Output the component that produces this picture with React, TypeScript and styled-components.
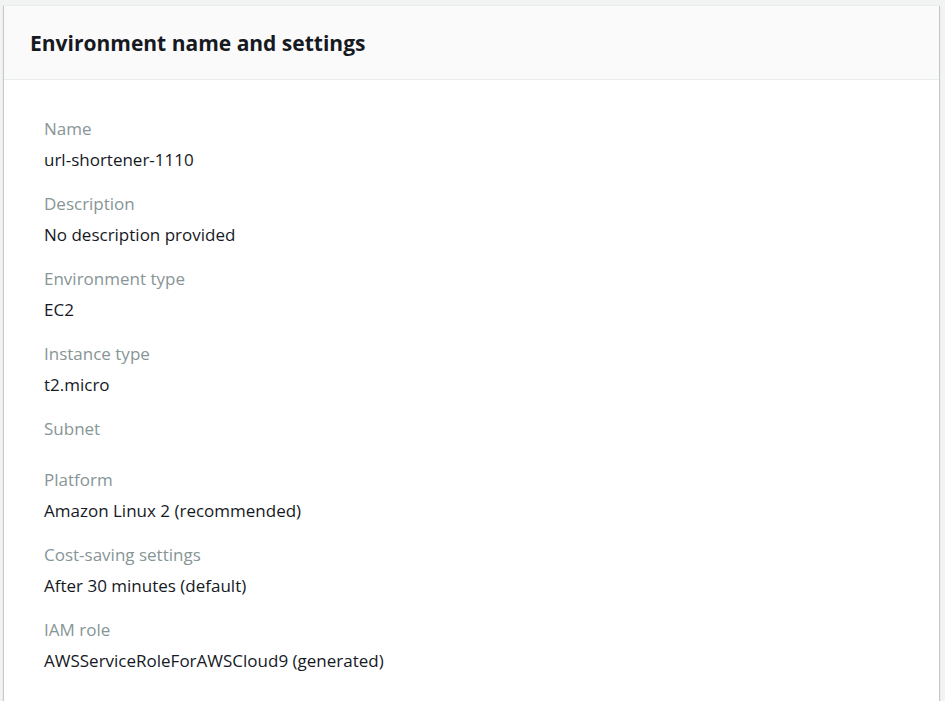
import React from 'react'
import styled, { createGlobalStyle } from 'styled-components'

const GlobalStyle = createGlobalStyle`
  body {
    margin: 0;
    background: #f2f3f3;
    font-family: "Open Sans", Arial, sans-serif;
    color: #16191f;
  }
`

const Page = styled.div`
  padding: 5px 6px 0 4px;
  height: 701px;
  box-sizing: border-box;
  overflow: hidden;
`

const Panel = styled.section`
  background: #ffffff;
  border-top: 1px solid #eaeded;
  box-shadow: 0 1px 1px 0 rgba(0, 28, 36, 0.3), 1px 1px 1px 0 rgba(0, 28, 36, 0.15),
    -1px 1px 1px 0 rgba(0, 28, 36, 0.15);
  min-height: 720px;
`

const Header = styled.div`
  background: #fafafa;
  border-bottom: 1px solid #eaeded;
  height: 73px;
  display: flex;
  align-items: center;
  padding: 0 26px;
`

const Title = styled.h2`
  margin: 0;
  font-size: 21px;
  font-weight: 700;
  color: #16191f;
`

const Body = styled.div`
  padding: 38px 40px 0 40px;
`

const Item = styled.div`
  margin-bottom: 21px;
`

const Label = styled.div`
  font-size: 17px;
  line-height: 22px;
  padding-bottom: 8px;
  color: #879596;
`

const Value = styled.div`
  font-size: 17px;
  line-height: 24px;
  color: #16191f;
`

const settings = [
  { label: 'Name', value: 'url-shortener-1110' },
  { label: 'Description', value: 'No description provided' },
  { label: 'Environment type', value: 'EC2' },
  { label: 'Instance type', value: 't2.micro' },
  { label: 'Subnet', value: '' },
  { label: 'Platform', value: 'Amazon Linux 2 (recommended)' },
  { label: 'Cost-saving settings', value: 'After 30 minutes (default)' },
  { label: 'IAM role', value: 'AWSServiceRoleForAWSCloud9 (generated)' },
]

const App = () => {
  return (
    <Page>
      <GlobalStyle />
      <Panel>
        <Header>
          <Title>Environment name and settings</Title>
        </Header>
        <Body>
          {settings.map((s) => (
            <Item key={s.label}>
              <Label>{s.label}</Label>
              {s.value && <Value>{s.value}</Value>}
            </Item>
          ))}
        </Body>
      </Panel>
    </Page>
  )
}

export default App
